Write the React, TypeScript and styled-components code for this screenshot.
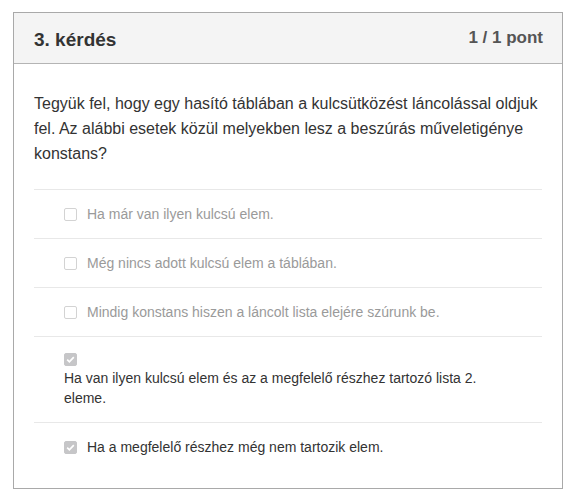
import styled, { createGlobalStyle } from 'styled-components';

const GlobalStyle = createGlobalStyle`
    body {
        margin: 0;
        background: #ffffff;
        font-family: "Liberation Sans", Arial, sans-serif;
    }
`;

interface Answer {
    text: string;
    checked: boolean;
}

const answers: Answer[] = [
    { text: 'Ha már van ilyen kulcsú elem.', checked: false },
    { text: 'Még nincs adott kulcsú elem a táblában.', checked: false },
    { text: 'Mindig konstans hiszen a láncolt lista elejére szúrunk be.', checked: false },
    { text: 'Ha van ilyen kulcsú elem és az a megfelelő részhez tartozó lista 2. eleme.', checked: true },
    { text: 'Ha a megfelelő részhez még nem tartozik elem.', checked: true },
];

const Check = ({ checked }: { checked: boolean }) => (
    <Box $checked={checked}>
        {checked && (
            <svg width="11" height="11" viewBox="0 0 11 11">
                <path d="M2.2 5.6 L4.4 7.8 L8.8 3.2" fill="none" stroke="#ffffff" strokeWidth="1.7" />
            </svg>
        )}
    </Box>
);

export default function App() {
    return (
        <>
            <GlobalStyle />
            <Card>
                <Header>
                    <Title>3. kérdés</Title>
                    <Points>1 / 1 pont</Points>
                </Header>
                <Body>
                    <Question>
                        Tegyük fel, hogy egy hasító táblában a kulcsütközést láncolással oldjuk
                        fel. Az alábbi esetek közül melyekben lesz a beszúrás műveletigénye
                        konstans?
                    </Question>
                    <List>
                        {answers.map((a) => (
                            <Option key={a.text}>
                                <Check checked={a.checked} />
                                <Label $checked={a.checked}>{a.text}</Label>
                            </Option>
                        ))}
                    </List>
                </Body>
            </Card>
        </>
    );
}

const Card = styled.div`
    box-sizing: border-box;
    width: 550px;
    margin: 12px 0 0 13px;
    border: 1px solid #a9a9a9;
    background: #ffffff;
`;

const Header = styled.div`
    box-sizing: border-box;
    height: 51px;
    display: flex;
    justify-content: space-between;
    align-items: flex-start;
    padding: 0 19px 0 20px;
    background: #f4f4f4;
    border-bottom: 1px solid #b4b4b4;
`;

const Title = styled.h3`
    margin: 16px 0 0;
    font-size: 19px;
    font-weight: bold;
    color: #333333;
    line-height: 22px;
`;

const Points = styled.span`
    margin-top: 15px;
    font-size: 17px;
    font-weight: bold;
    color: #555555;
    line-height: 20px;
`;

const Body = styled.div`
    padding: 27px 20px 17px;
`;

const Question = styled.p`
    margin: 0 0 23px;
    font-size: 16px;
    line-height: 25px;
    color: #333333;
`;

const List = styled.div`
    display: flex;
    flex-direction: column;
`;

const Option = styled.div`
    display: flex;
    flex-wrap: wrap;
    align-items: center;
    column-gap: 10px;
    padding: 14px 0 14px 30px;
    border-top: 1px solid #e8e8e8;
`;

const Box = styled.span<{ $checked: boolean }>`
    box-sizing: border-box;
    width: 13px;
    height: 13px;
    margin: 2px 0;
    border-radius: 2px;
    display: flex;
    align-items: center;
    justify-content: center;
    border: 1px solid ${(p) => (p.$checked ? '#c6c6c8' : '#d3d3d3')};
    background: ${(p) => (p.$checked ? '#c6c6c8' : '#ffffff')};
`;

const Label = styled.span<{ $checked: boolean }>`
    max-width: calc(100% - 20px);
    font-size: 14px;
    line-height: 20px;
    color: ${(p) => (p.$checked ? '#333333' : '#9a9a9a')};
`;
